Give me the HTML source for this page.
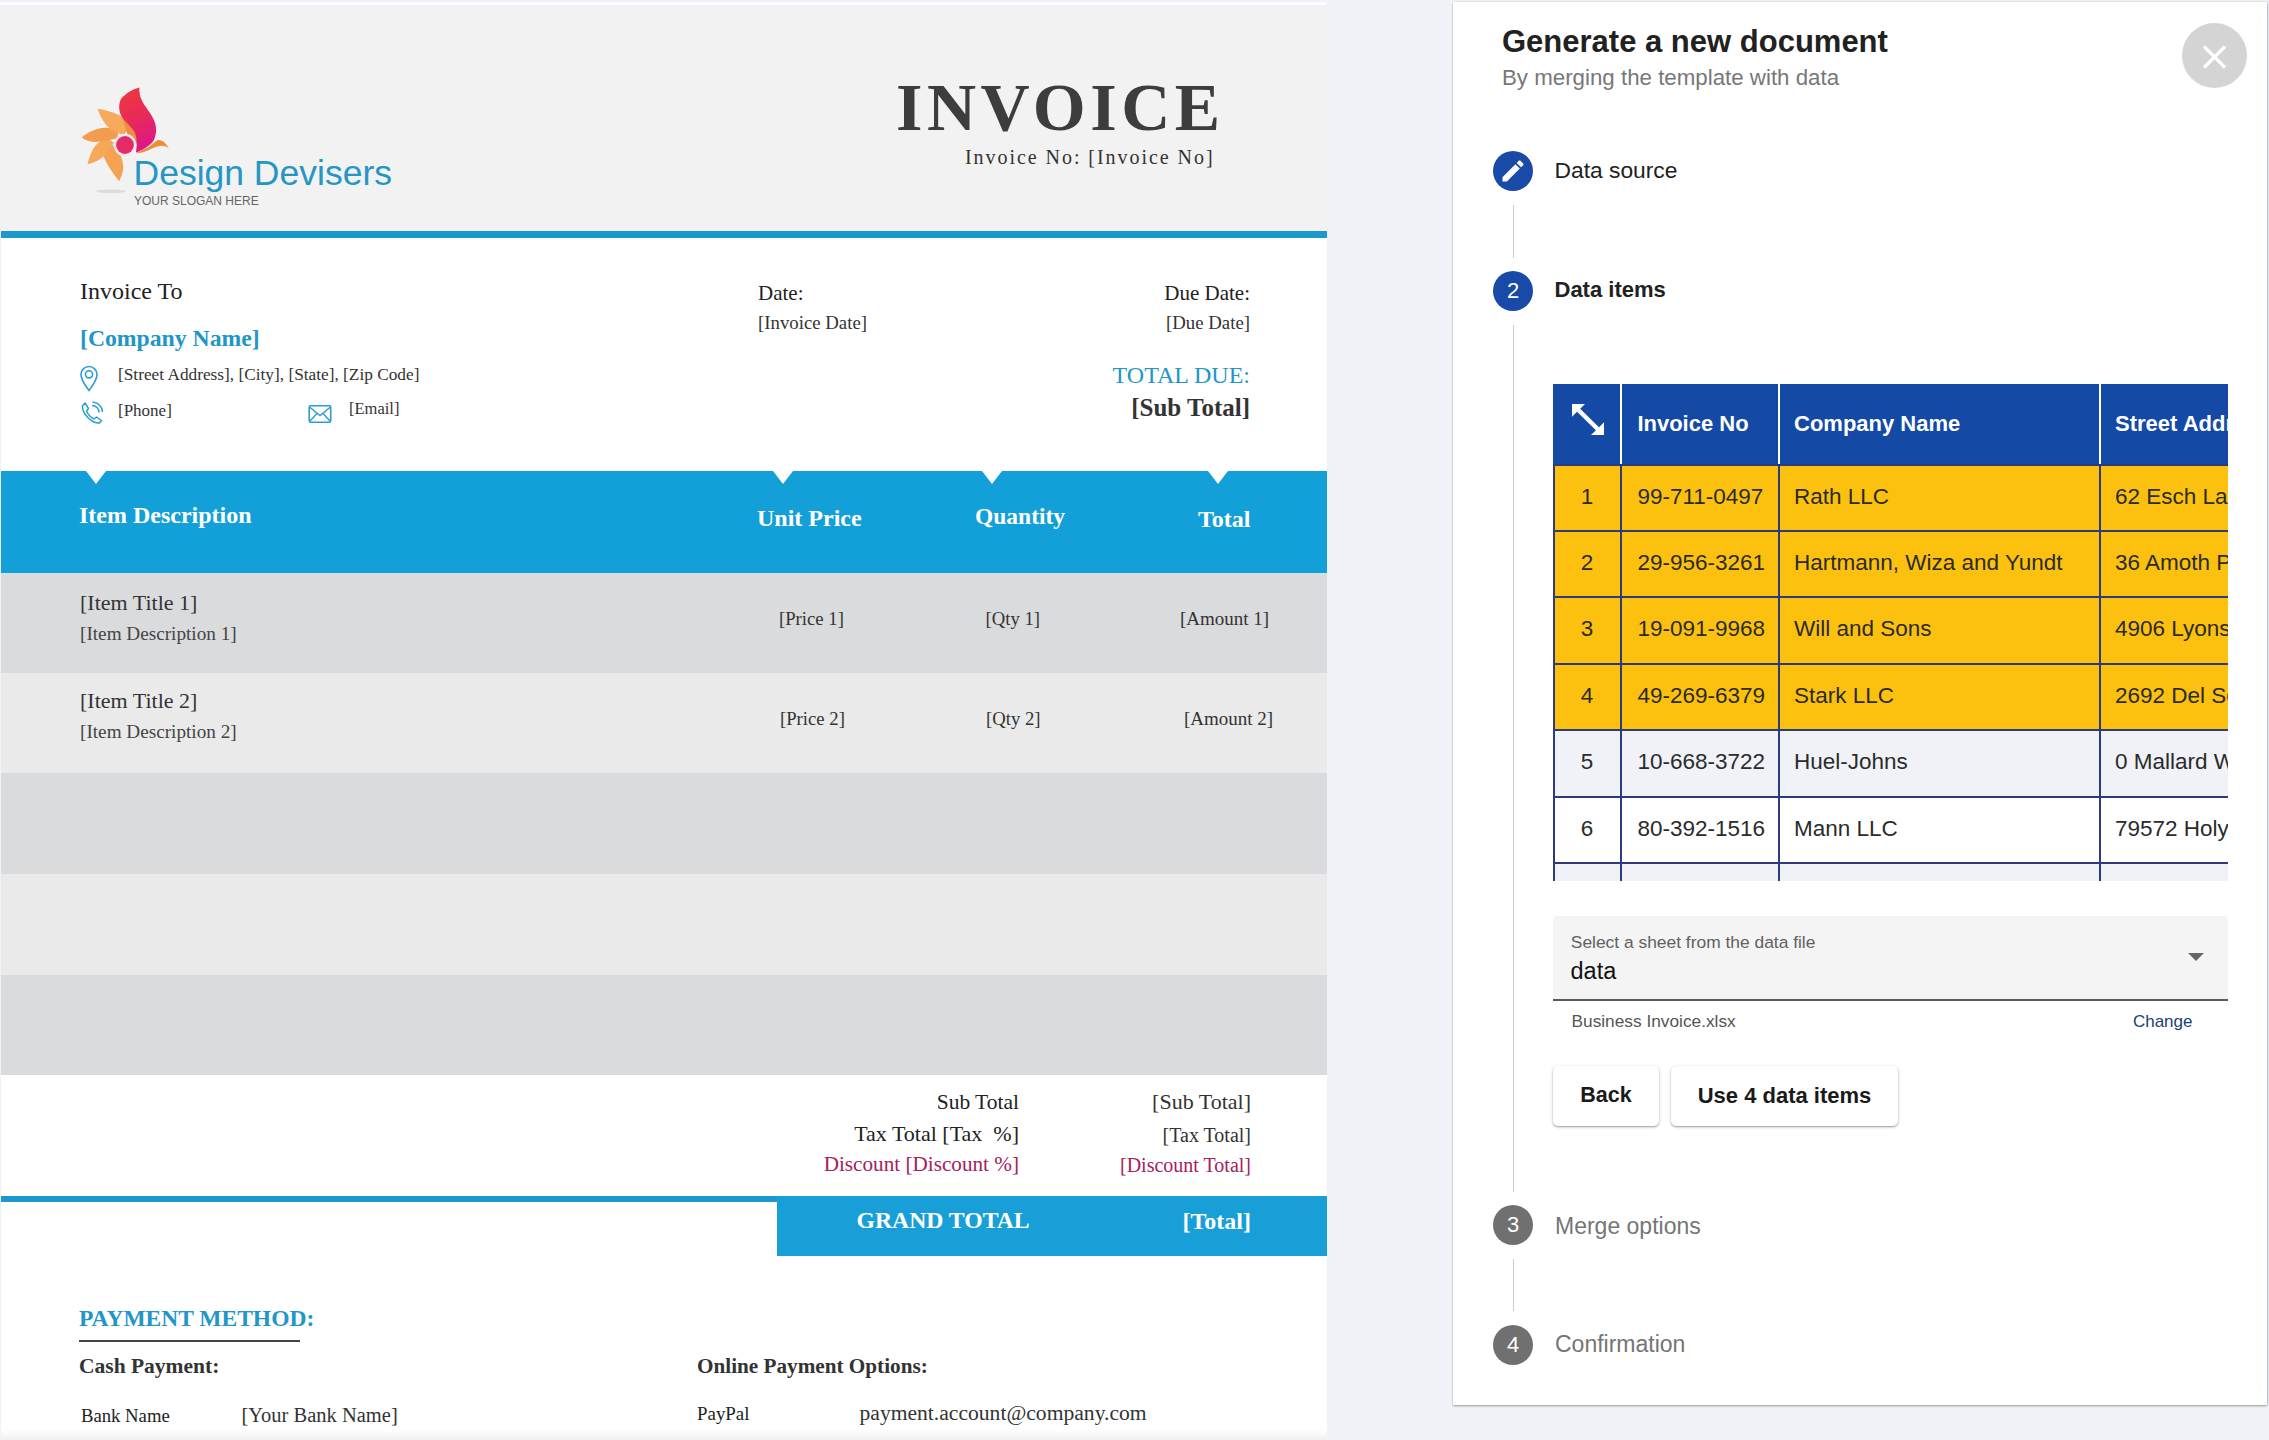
<!DOCTYPE html>
<html><head><meta charset="utf-8">
<style>
html,body{margin:0;padding:0;width:2269px;height:1440px;overflow:hidden;background:#eff3f7;position:relative}
.a{position:absolute;white-space:pre;line-height:1}
.s{font-family:"Liberation Serif",serif}
.ss{font-family:"Liberation Sans",sans-serif}
.b{font-weight:700}
#doc{position:absolute;left:1px;top:6px;width:1326px;height:1434px;background:#fff;overflow:hidden}
.row{position:absolute;left:1px;width:1326px}
.tri{position:absolute;top:471px;width:0;height:0;border-left:10px solid transparent;border-right:10px solid transparent;border-top:13px solid #fff}
#panel{position:absolute;left:1453px;top:2px;width:814px;height:1403px;background:#fff;box-shadow:0 1px 2px rgba(0,0,0,.35),1px 0 2px rgba(0,0,0,.12)}
.circ{position:absolute;left:1493px;width:40px;height:40px;border-radius:50%;color:#fff;font-family:"Liberation Sans",sans-serif;font-size:22px;line-height:40px;text-align:center}
.vl{position:absolute;left:1513px;width:1px;background:#cfcfcf}
.btn{position:absolute;top:1066px;height:60px;background:#fff;border-radius:5px;box-shadow:0 1px 3px rgba(0,0,0,.3),0 1px 1px rgba(0,0,0,.14)}
</style></head><body>

<div id="doc"></div>
<div class="a" style="left:0;top:2px;width:1327px;height:3px;background:#fafcfd"></div>
<!-- header bg -->
<div class="a" style="left:1px;top:6px;width:1326px;height:225px;background:#f2f2f2"></div>
<div class="a" style="left:1px;top:231px;width:1326px;height:7px;background:#1c98cf"></div>


<!-- logo -->
<svg class="a" style="left:70px;top:75px" width="140" height="140" viewBox="0 0 140 140">
<defs><linearGradient id="rg" x1="0" y1="0" x2="0.3" y2="1"><stop offset="0" stop-color="#f03a3c"/><stop offset="0.55" stop-color="#e82a58"/><stop offset="1" stop-color="#df1a82"/></linearGradient></defs>
<ellipse cx="41" cy="116.3" rx="15" ry="1.8" fill="#dcdcdc"/>
<path d="M49.2 106.3 C43 98 38 92 33.5 81 C31.5 74 33 70 35 67 L46 72 C50 78 53 84 53.3 92.5 C53.3 97 51 102 49.2 106.3Z" fill="#f4a352"/>
<path d="M17.5 89.2 C19.5 82 21 78 23 74 C27 68 31 65 37 62.5 L44 68 C40 74 37 77 33 82 C28 86 22 88 17.5 89.2Z" fill="#f5a858"/>
<path d="M11.7 62.5 C18 57 24 54.5 32 53 C38 52.3 44 53 49 55.5 L47 63.5 C40 65 33 66 26 67 C20 67 15 65 11.7 62.5Z" fill="#f29d4e"/>
<path d="M27.5 33.8 C34 34.5 42 37 49 40 C55 43 59 47 62 52 L53 60 C44 57 38 53 34 47 C31 43 29 38 27.5 33.8Z" fill="#f7aa5c"/>
<path d="M51 40.5 C58 43 63 46.5 66 52 C69 58 68.5 64 66.5 69 L60 68 C58 62 57 55 51 40.5Z" fill="#f08d3e"/>
<path d="M69.6 12.5 C63 14 56 18 51 24 C48 30 49 37 52 42 C56 48 62 52 65 58 C67 63 67 70 66 77.5 C72 75.5 80 71 84 65 C87 58 87 51 83 43 C79 35 73 30 70.5 22 C69.5 18 69 15 69.6 12.5Z" fill="url(#rg)"/>
<circle cx="55" cy="70" r="11.3" fill="#fce8ee"/>
<circle cx="55" cy="70" r="8.9" fill="#e52a66"/>
<path d="M65.8 78.3 C70 76 74 74 78 72.5 C82 70 84.5 66.5 88 65 C92 64.5 96 68 98.8 73.3 C95.5 71 93 70.5 90 71 C86 71.5 83 73 79 75 C74.5 77 70 78.3 65.8 78.3Z" fill="#f08c34"/>
</svg>
<div class="a ss" style="left:133.5px;top:156.3px;font-size:35.5px;color:#2596c4">Design Devisers</div>
<div class="a ss" style="left:134px;top:195.1px;font-size:12px;color:#666">YOUR SLOGAN HERE</div>
<!-- contact icons -->
<svg class="a" style="left:78px;top:363px" width="24" height="30" viewBox="0 0 24 30"><path d="M11 27.5 C6 21 3 16 3 11.5 A8 8 0 0 1 19 11.5 C19 16 16 21 11 27.5Z" fill="none" stroke="#2a9fd0" stroke-width="1.6"/><circle cx="11" cy="11.3" r="3.6" fill="none" stroke="#2a9fd0" stroke-width="1.6"/></svg>
<svg class="a" style="left:78px;top:399px" width="28" height="28" viewBox="0 0 28 28"><path d="M7 4 L10.5 9.5 L8.5 12 C10 15.5 12.5 18.5 16 20 L18.5 18 L23.5 21.5 L21.5 24 C14 24.5 4 15 4.5 7Z" fill="none" stroke="#2a9fd0" stroke-width="1.5" stroke-linejoin="round"/><path d="M14 6.5 A7 7 0 0 1 21 13.5 M14.5 3 A10.5 10.5 0 0 1 24.5 13" fill="none" stroke="#2a9fd0" stroke-width="1.5"/></svg>
<svg class="a" style="left:307px;top:403px" width="26" height="22" viewBox="0 0 26 22"><rect x="2.2" y="2.8" width="21.5" height="16.5" rx="1.5" fill="none" stroke="#2a9fd0" stroke-width="1.6"/><path d="M2.5 4 L13 12.5 L23.5 4 M2.5 18.5 L10 10.5 M23.5 18.5 L16 10.5" fill="none" stroke="#2a9fd0" stroke-width="1.4"/></svg>

<!-- doc text -->
<div class="a s b" style="left:896px;top:72.5px;font-size:68px;letter-spacing:4.5px;color:#3d3d40">INVOICE</div>
<div class="a s" style="left:965px;top:147px;font-size:20px;letter-spacing:1.95px;color:#333">Invoice No: [Invoice No]</div>

<div class="a s" style="left:80px;top:279px;font-size:24px;color:#222">Invoice To</div>
<div class="a s b" style="left:80px;top:326.8px;font-size:23.7px;color:#2196c8">[Company Name]</div>
<div class="a s" style="left:118px;top:366px;font-size:17.3px;color:#333">[Street Address], [City], [State], [Zip Code]</div>
<div class="a s" style="left:118px;top:401.5px;font-size:17px;color:#333">[Phone]</div>
<div class="a s" style="left:349px;top:401px;font-size:16.5px;color:#333">[Email]</div>

<div class="a s" style="left:758px;top:282.5px;font-size:21px;color:#222">Date:</div>
<div class="a s" style="left:758px;top:314px;font-size:18.8px;color:#333">[Invoice Date]</div>
<div class="a s" style="right:1019px;top:282.5px;font-size:21px;color:#222">Due Date:</div>
<div class="a s" style="right:1019px;top:314px;font-size:18.8px;color:#333">[Due Date]</div>
<div class="a s" style="right:1019px;top:362.5px;font-size:24px;color:#2196c8">TOTAL DUE:</div>
<div class="a s b" style="right:1019px;top:395px;font-size:25px;color:#333">[Sub Total]</div>

<!-- item table -->
<div class="row" style="top:471px;height:102px;background:#139fd7"></div>
<div class="tri" style="left:86px"></div>
<div class="tri" style="left:773px"></div>
<div class="tri" style="left:982px"></div>
<div class="tri" style="left:1208px"></div>
<div class="row" style="top:573px;height:100px;background:#dadbdd"></div>
<div class="row" style="top:673px;height:100px;background:#eaeaea"></div>
<div class="row" style="top:773px;height:101px;background:#dadbdd"></div>
<div class="row" style="top:874px;height:101px;background:#eaeaea"></div>
<div class="row" style="top:975px;height:100px;background:#dadbdd"></div>

<div class="a s b" style="left:79px;top:503.2px;font-size:24px;color:#fff">Item Description</div>
<div class="a s b" style="left:757px;top:505.6px;font-size:24px;color:#fff">Unit Price</div>
<div class="a s b" style="left:975px;top:505.3px;font-size:23.5px;color:#fff">Quantity</div>
<div class="a s b" style="left:1198px;top:506.9px;font-size:24px;color:#fff">Total</div>

<div class="a s" style="left:80px;top:591.6px;font-size:22px;color:#333">[Item Title 1]</div>
<div class="a s" style="left:80px;top:624px;font-size:19.2px;color:#444">[Item Description 1]</div>
<div class="a s" style="left:779px;top:609.6px;font-size:18.7px;color:#333">[Price 1]</div>
<div class="a s" style="left:985.5px;top:610px;font-size:18.7px;color:#333">[Qty 1]</div>
<div class="a s" style="left:1180px;top:609.4px;font-size:19px;color:#333">[Amount 1]</div>

<div class="a s" style="left:80px;top:689.6px;font-size:22px;color:#333">[Item Title 2]</div>
<div class="a s" style="left:80px;top:722px;font-size:19.2px;color:#444">[Item Description 2]</div>
<div class="a s" style="left:780px;top:710.3px;font-size:18.7px;color:#333">[Price 2]</div>
<div class="a s" style="left:986px;top:710.3px;font-size:18.7px;color:#333">[Qty 2]</div>
<div class="a s" style="left:1184px;top:709px;font-size:19px;color:#333">[Amount 2]</div>

<!-- totals -->
<div class="a s" style="right:1250px;top:1091.7px;font-size:21.5px;color:#222">Sub Total</div>
<div class="a s" style="right:1018px;top:1091.3px;font-size:22px;color:#333">[Sub Total]</div>
<div class="a s" style="right:1250px;top:1123.2px;font-size:22px;color:#222">Tax Total [Tax  %]</div>
<div class="a s" style="right:1018px;top:1124.8px;font-size:20px;color:#333">[Tax Total]</div>
<div class="a s" style="right:1250px;top:1154px;font-size:21.2px;color:#a3215d">Discount [Discount %]</div>
<div class="a s" style="right:1018px;top:1155px;font-size:20px;color:#a3215d">[Discount Total]</div>

<div class="a" style="left:1px;top:1196px;width:776px;height:6px;background:#1c98cf"></div>
<div class="a" style="left:777px;top:1196px;width:550px;height:60px;background:#189fd7"></div>
<div class="a s b" style="left:856.5px;top:1208.5px;font-size:23.7px;color:#fff">GRAND TOTAL</div>
<div class="a s b" style="right:1018px;top:1209.4px;font-size:24px;color:#fff">[Total]</div>

<!-- payment -->
<div class="a s b" style="left:79px;top:1307px;font-size:23.5px;color:#2196c8">PAYMENT METHOD:</div>
<div class="a" style="left:79px;top:1339.5px;width:221px;height:2px;background:#444"></div>
<div class="a s b" style="left:79px;top:1355.8px;font-size:21.5px;color:#333">Cash Payment:</div>
<div class="a s" style="left:81px;top:1406.9px;font-size:18.7px;color:#222">Bank Name</div>
<div class="a s" style="left:241.5px;top:1405.4px;font-size:20.5px;color:#333">[Your Bank Name]</div>
<div class="a s b" style="left:697px;top:1356.4px;font-size:21.2px;color:#333">Online Payment Options:</div>
<div class="a s" style="left:697px;top:1405.2px;font-size:18.9px;color:#222">PayPal</div>
<div class="a s" style="left:859.5px;top:1402.9px;font-size:21.6px;color:#333">payment.account@company.com</div>
<div class="a" style="left:1px;top:1429px;width:1326px;height:11px;background:linear-gradient(#fff,#f0f0f0)"></div>

<!-- PANEL -->
<div id="panel"></div>
<div class="a ss b" style="left:1502px;top:26px;font-size:31px;color:#212121">Generate a new document</div>
<div class="a ss" style="left:1502px;top:67px;font-size:22.3px;color:#777">By merging the template with data</div>
<div class="a" style="left:2182px;top:22.5px;width:65px;height:65px;border-radius:50%;background:#d4d4d4"></div>

<svg class="a" style="left:2182px;top:22.5px" width="65" height="65" viewBox="0 0 65 65"><path d="M22 23.5 L43 44.5 M43 23.5 L22 44.5" stroke="#fff" stroke-width="3.2" fill="none"/></svg>

<!-- steps -->
<div class="circ" style="top:151px;background:#1a4aa8"><svg style="position:absolute;left:6px;top:6px" width="28" height="28" viewBox="0 0 24 24"><path fill="#fff" d="M3 17.25V21h3.75L17.81 9.94l-3.75-3.75L3 17.25zM20.71 7.04c.39-.39.39-1.02 0-1.41l-2.34-2.34c-.39-.39-1.02-.39-1.41 0l-1.83 1.83 3.75 3.75 1.83-1.83z"/></svg></div>
<div class="a ss" style="left:1554.5px;top:159.3px;font-size:22.8px;color:#212121">Data source</div>
<div class="vl" style="top:205px;height:53px"></div>
<div class="circ" style="top:271px;background:#1a4aa8">2</div>
<div class="a ss b" style="left:1554.5px;top:279.4px;font-size:22px;color:#212121">Data items</div>
<div class="vl" style="top:325px;height:867px"></div>
<div class="circ" style="top:1205px;background:#707070">3</div>
<div class="a ss" style="left:1555px;top:1214.5px;font-size:23px;color:#757575">Merge options</div>
<div class="vl" style="top:1259px;height:52px"></div>
<div class="circ" style="top:1324.5px;background:#707070">4</div>
<div class="a ss" style="left:1555px;top:1332.5px;font-size:23px;color:#757575">Confirmation</div>

<!-- data table -->
<div class="a" style="left:1553px;top:384px;width:675px;height:497px;overflow:hidden">
<div class="a" style="left:0;top:0;width:700px;height:80.5px;background:#1449a5"></div>
<div class="a" style="left:67px;top:0;width:2px;height:80.5px;background:#fff"></div>
<div class="a" style="left:225px;top:0;width:2px;height:80.5px;background:#fff"></div>
<div class="a" style="left:546px;top:0;width:2px;height:80.5px;background:#fff"></div>
<svg class="a" style="left:19px;top:19.5px" width="32" height="31" viewBox="0 0 32 31"><path d="M0 0 H13 L8.2 4.8 L27 23.3 L32 18.3 V31 H19 L23.9 26.3 L5 7.8 L0 12.8 Z" fill="#fff"/></svg>
<div class="a ss b" style="left:84.4px;top:29.4px;font-size:22px;color:#fff">Invoice No</div>
<div class="a ss b" style="left:241px;top:29.4px;font-size:22px;color:#fff">Company Name</div>
<div class="a ss b" style="left:562px;top:29.4px;font-size:22px;color:#fff">Street Address</div>
<div class="a" style="left:0;top:80.5px;width:700px;height:66.4px;background:#fcc10f"></div>
<div class="a ss" style="left:0;width:68px;text-align:center;top:101.6px;font-size:22.5px;color:#2b2b2b">1</div>
<div class="a ss" style="left:84.4px;top:101.6px;font-size:22.5px;color:#2b2b2b">99-711-0497</div>
<div class="a ss" style="left:241px;top:101.6px;font-size:22.5px;color:#2b2b2b">Rath LLC</div>
<div class="a ss" style="left:562px;top:101.6px;font-size:22.5px;color:#2b2b2b">62 Esch Lane</div>
<div class="a" style="left:0;top:146.9px;width:700px;height:66.4px;background:#fcc10f"></div>
<div class="a ss" style="left:0;width:68px;text-align:center;top:168.0px;font-size:22.5px;color:#2b2b2b">2</div>
<div class="a ss" style="left:84.4px;top:168.0px;font-size:22.5px;color:#2b2b2b">29-956-3261</div>
<div class="a ss" style="left:241px;top:168.0px;font-size:22.5px;color:#2b2b2b">Hartmann, Wiza and Yundt</div>
<div class="a ss" style="left:562px;top:168.0px;font-size:22.5px;color:#2b2b2b">36 Amoth Park</div>
<div class="a" style="left:0;top:213.3px;width:700px;height:66.4px;background:#fcc10f"></div>
<div class="a ss" style="left:0;width:68px;text-align:center;top:234.4px;font-size:22.5px;color:#2b2b2b">3</div>
<div class="a ss" style="left:84.4px;top:234.4px;font-size:22.5px;color:#2b2b2b">19-091-9968</div>
<div class="a ss" style="left:241px;top:234.4px;font-size:22.5px;color:#2b2b2b">Will and Sons</div>
<div class="a ss" style="left:562px;top:234.4px;font-size:22.5px;color:#2b2b2b">4906 Lyons Street</div>
<div class="a" style="left:0;top:279.7px;width:700px;height:66.4px;background:#fcc10f"></div>
<div class="a ss" style="left:0;width:68px;text-align:center;top:300.8px;font-size:22.5px;color:#2b2b2b">4</div>
<div class="a ss" style="left:84.4px;top:300.8px;font-size:22.5px;color:#2b2b2b">49-269-6379</div>
<div class="a ss" style="left:241px;top:300.8px;font-size:22.5px;color:#2b2b2b">Stark LLC</div>
<div class="a ss" style="left:562px;top:300.8px;font-size:22.5px;color:#2b2b2b">2692 Del Sol Trail</div>
<div class="a" style="left:0;top:346.1px;width:700px;height:66.4px;background:#f0f2f7"></div>
<div class="a ss" style="left:0;width:68px;text-align:center;top:367.2px;font-size:22.5px;color:#2b2b2b">5</div>
<div class="a ss" style="left:84.4px;top:367.2px;font-size:22.5px;color:#2b2b2b">10-668-3722</div>
<div class="a ss" style="left:241px;top:367.2px;font-size:22.5px;color:#2b2b2b">Huel-Johns</div>
<div class="a ss" style="left:562px;top:367.2px;font-size:22.5px;color:#2b2b2b">0 Mallard Way</div>
<div class="a" style="left:0;top:412.5px;width:700px;height:66.4px;background:#fff"></div>
<div class="a ss" style="left:0;width:68px;text-align:center;top:433.6px;font-size:22.5px;color:#2b2b2b">6</div>
<div class="a ss" style="left:84.4px;top:433.6px;font-size:22.5px;color:#2b2b2b">80-392-1516</div>
<div class="a ss" style="left:241px;top:433.6px;font-size:22.5px;color:#2b2b2b">Mann LLC</div>
<div class="a ss" style="left:562px;top:433.6px;font-size:22.5px;color:#2b2b2b">79572 Holy Cross</div>
<div class="a" style="left:0;top:478.9px;width:700px;height:66.4px;background:#f0f2f7"></div>
<div class="a" style="left:0;top:79.5px;width:700px;height:2px;background:#2e3a80"></div>
<div class="a" style="left:0;top:145.9px;width:700px;height:2px;background:#2e3a80"></div>
<div class="a" style="left:0;top:212.3px;width:700px;height:2px;background:#2e3a80"></div>
<div class="a" style="left:0;top:278.7px;width:700px;height:2px;background:#2e3a80"></div>
<div class="a" style="left:0;top:345.1px;width:700px;height:2px;background:#2e3a80"></div>
<div class="a" style="left:0;top:411.5px;width:700px;height:2px;background:#2e3a80"></div>
<div class="a" style="left:0;top:477.9px;width:700px;height:2px;background:#2e3a80"></div>
<div class="a" style="left:0px;top:80.5px;width:2px;height:420px;background:#2e3a80"></div>
<div class="a" style="left:67px;top:80.5px;width:2px;height:420px;background:#2e3a80"></div>
<div class="a" style="left:225px;top:80.5px;width:2px;height:420px;background:#2e3a80"></div>
<div class="a" style="left:546px;top:80.5px;width:2px;height:420px;background:#2e3a80"></div>
</div>

<!-- select -->
<div class="a" style="left:1553px;top:916px;width:674.5px;height:83px;background:#f4f4f4;border-radius:4px 4px 0 0;border-bottom:2px solid #5a5a5a"></div>
<div class="a ss" style="left:1570.8px;top:933.6px;font-size:17.4px;color:#616161">Select a sheet from the data file</div>
<div class="a ss" style="left:1570.5px;top:959.8px;font-size:23.5px;color:#111">data</div>
<div class="a" style="left:2187.5px;top:953px;width:0;height:0;border-left:8px solid transparent;border-right:8px solid transparent;border-top:8px solid #666"></div>
<div class="a ss" style="left:1571.5px;top:1012.9px;font-size:17.3px;color:#555">Business Invoice.xlsx</div>
<div class="a ss" style="right:76.5px;top:1013.3px;font-size:17px;color:#21407a">Change</div>

<!-- buttons -->
<div class="btn" style="left:1553px;width:106px"></div>
<div class="a ss b" style="left:1553px;width:106px;text-align:center;top:1085px;font-size:21.5px;color:#1a1a1a">Back</div>
<div class="btn" style="left:1671px;width:227px"></div>
<div class="a ss b" style="left:1671px;width:227px;text-align:center;top:1084.7px;font-size:22px;color:#1a1a1a">Use 4 data items</div>

</body></html>
